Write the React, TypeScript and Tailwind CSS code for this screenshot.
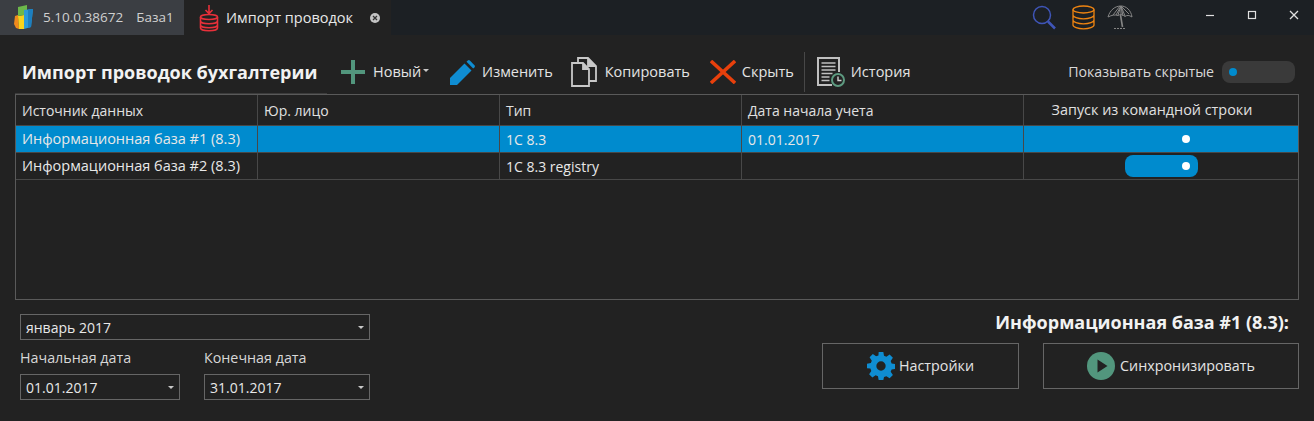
const font = "font-['Open_Sans','Noto_Sans',sans-serif]";

function Caret({ className = '' }: { className?: string }) {
  return <span className={`border-x-[3px] border-t-[3px] border-x-transparent border-t-[#c8c8c8] ${className}`} />;
}

function Logo() {
  return (
    <svg width="20" height="25" viewBox="0 0 20 25">
      <path d="M1 11l3-1 1 14-3-1-2-4z" fill="#f08a1d" />
      <path d="M4 11l6-1v14H5z" fill="#f6d31c" />
      <path d="M4 2l9-2v5h-3v5l-6 1z" fill="#6cb84a" />
      <path d="M10 5l9-1-2 18-7 2z" fill="#2b9ad8" />
      <path d="M14 4.500L19 4l-2 18-3 1z" fill="#1c7fc0" />
    </svg>
  );
}

function ImportIcon() {
  return (
    <svg width="20" height="28" viewBox="0 0 20 28" fill="none" stroke="#e8303a" strokeWidth="1.6">
      <path d="M10 1v8M6.500 6l3.500 3.500L13.500 6" />
      <ellipse cx="10" cy="13" rx="8.500" ry="2.500" />
      <path d="M1.500 13v11c0 1.500 3.500 2.800 8.500 2.800s8.500-1.300 8.500-2.800V13M1.500 17c0 1.500 3.500 2.800 8.500 2.800s8.500-1.300 8.500-2.800M1.500 21c0 1.500 3.500 2.800 8.500 2.800s8.500-1.300 8.500-2.800" />
    </svg>
  );
}

function TabClose() {
  return (
    <span className="flex h-[10px] w-[10px] items-center justify-center rounded-full bg-[#c4c4c4]">
      <svg width="6" height="6" viewBox="0 0 6 6" stroke="#333" strokeWidth="1.300">
        <path d="M1 1l4 4M5 1L1 5" />
      </svg>
    </span>
  );
}

function SearchIcon() {
  return (
    <svg width="24" height="26" viewBox="0 0 24 26" fill="none" stroke="#3f55b8" strokeWidth="1.500">
      <circle cx="10" cy="10" r="8.500" />
      <path d="M16 16.500l7 7" strokeWidth="2.500" />
    </svg>
  );
}

function DbIcon() {
  return (
    <svg width="23" height="25" viewBox="0 0 23 25" fill="none" stroke="#ee8411" strokeWidth="1.300">
      <ellipse cx="11.500" cy="4.500" rx="10.500" ry="3.500" />
      <path d="M1 4.500v15.500c0 2 4.700 3.800 10.500 3.800S22 22 22 20V4.500M1 10c0 2 4.700 3.800 10.500 3.800S22 12 22 10M1 15c0 2 4.700 3.800 10.500 3.800S22 17 22 15" />
    </svg>
  );
}

function UmbrellaIcon() {
  return (
    <svg width="26" height="25" viewBox="0 0 26 25" fill="none" stroke="#858585" strokeWidth="1">
      <path d="M1 12C3 5 8 1 14 1c5 0 10 4 11 11-3-2-5-2-7-.5-2-2-5-2.500-7-1-3-1-6-.5-10 1.500z" />
      <path d="M6 10l7-9M9 10l5-9M11 10l3-9M14 10V1M16 11l-2-10M18 11l-4-10M22 9l-8-8" />
      <path d="M13.500 10l2 12" strokeWidth="1.600" />
      <path d="M7 23.500h12" strokeDasharray="2 1" />
    </svg>
  );
}

function PencilIcon() {
  return (
    <svg width="25" height="25" viewBox="0 0 25 25" fill="#0f8dd2">
      <path d="M0 25v-7L14.500 3.500l7 7L7 25z" />
      <path d="M16.500 1.800l1.300-1.300a1.500 1.500 0 0 1 2 0l4.700 4.700a1.500 1.500 0 0 1 0 2l-1.300 1.300z" />
    </svg>
  );
}

function CopyIcon() {
  return (
    <svg width="27" height="30" viewBox="0 0 27 30" fill="none" stroke="#c8c8c8" strokeWidth="1.800">
      <path d="M7 6V1h10l8 8v15h-7" />
      <path d="M17 1v8h8" fill="#c8c8c8" />
      <path d="M1 6h11l6 6v17H1z" fill="#222" />
      <path d="M12 6v6h6" fill="#c8c8c8" />
    </svg>
  );
}

function HistoryIcon() {
  return (
    <svg width="28" height="30" viewBox="0 0 28 30" fill="none" stroke="#c0c0c0" strokeWidth="1.600">
      <path d="M15 28H1V1h21v14" strokeWidth="2" />
      <path d="M4.500 6h14M4.500 9.500h14M4.500 13h14M4.500 16.500h11M4.500 20h8M4.500 23.500h8" />
      <circle cx="21" cy="23" r="6" stroke="#5d9a80" strokeWidth="2" />
      <path d="M21 19.500v4h3.500" stroke="#d0d0d0" strokeWidth="1.400" />
    </svg>
  );
}

function GearIcon() {
  return (
    <svg width="28" height="28" viewBox="0 0 24 24" fill="#0f8dd2" fillRule="evenodd">
      <path d="M10 0h4l.6 3.300 2 .8L19.400 2.200l2.800 2.800-1.900 2.800.8 2 3.300.6v4l-3.300.6-.8 2 1.900 2.800-2.800 2.800-2.800-1.900-2 .8L14 24h-4l-.6-3.300-2-.8-2.800 1.900-2.800-2.800 1.900-2.800-.8-2L0 14v-4l3.300-.6.8-2-1.900-2.800 2.800-2.800 2.800 1.900 2-.8zM12 8a4 4 0 1 0 0 8 4 4 0 0 0 0-8z" />
    </svg>
  );
}

function PlayIcon() {
  return (
    <svg width="28" height="28" viewBox="0 0 28 28">
      <circle cx="14" cy="14" r="14" fill="#52967d" />
      <path d="M10.500 7.500L20.500 14l-10 6.500z" fill="#222" />
    </svg>
  );
}

function Select({ text, className }: { text: string; className: string }) {
  return (
    <div className={`flex h-[26px] items-center justify-between border border-[#666] pl-[5px] pr-[5px] text-[14px] text-[#e8e8e8] ${className}`}>
      <span>{text}</span>
      <Caret />
    </div>
  );
}

function Tool({ icon, label, gap, caret = false }: { icon: React.ReactNode; label: string; gap: string; caret?: boolean }) {
  return (
    <div className={`flex items-center ${gap}`}>
      {icon}
      <span className="text-[14.5px] text-[#e4e4e4]">{label}</span>
      {caret && <Caret className="-ml-[6px] -mt-[3px]" />}
    </div>
  );
}

const columns = ['w-[242px] text-[14.5px]', 'w-[242px]', 'w-[242px]', 'w-[282px]'];

function Row({ cells, selected, toggle }: { cells: string[]; selected?: boolean; toggle?: boolean }) {
  return (
    <div className={`flex h-[27px] border-b border-[#484848] text-[14px] text-[#e8e8e8] ${selected ? 'bg-[#008bce]' : ''}`}>
      {cells.map((cell, i) => (
        <div key={i} className={`flex items-center border-r border-[#484848] px-[6px] ${columns[i]}`}>
          {cell}
        </div>
      ))}
      <div className="flex flex-1 items-center justify-center">
        <div className={`flex h-[22px] w-[73px] items-center justify-end rounded-[8px] pr-[8px] ${toggle ? 'bg-[#008bce]' : ''}`}>
          <span className="h-[8px] w-[8px] rounded-full bg-white" />
        </div>
      </div>
    </div>
  );
}

export default function App() {
  return (
    <div className={`flex h-[421px] w-[1314px] flex-col overflow-hidden bg-[#222222] ${font}`}>
      {/* title bar */}
      <div className="flex h-[35px] shrink-0 bg-[#1c2024]">
        <div className="flex w-[184px] items-center gap-[9px] bg-[#3b3e43] pl-[14px] text-[13.5px] text-[#d0d0d0]">
          <Logo />
          <span>5.10.0.38672</span>
          <span className="ml-[4px]">База1</span>
        </div>
        <div className="flex w-[207px] items-center bg-[#222222] pl-[15px] text-[14.5px] text-[#e8e8e8]">
          <ImportIcon />
          <span className="ml-[7px]">Импорт проводок</span>
          <span className="ml-[17px]"><TabClose /></span>
        </div>
        <div className="ml-auto flex items-center pr-[14px]">
          <SearchIcon />
          <span className="ml-[16px]"><DbIcon /></span>
          <span className="ml-[12px]"><UmbrellaIcon /></span>
          <div className="-mt-[5px] ml-[71px] flex items-center gap-[30px] text-[#e0e0e0]">
            <svg width="12" height="12" viewBox="0 0 12 12" stroke="currentColor" strokeWidth="1.200"><path d="M2 6.500h8" /></svg>
            <svg width="12" height="12" viewBox="0 0 12 12" fill="none" stroke="currentColor" strokeWidth="1.200"><rect x="2.500" y="2.500" width="7" height="7" /></svg>
            <svg width="12" height="12" viewBox="0 0 12 12" stroke="currentColor" strokeWidth="1.300"><path d="M2 2l8 8M10 2l-8 8" /></svg>
          </div>
        </div>
      </div>

      {/* toolbar */}
      <div className="flex h-[58px] shrink-0 items-center pl-[22px] pr-[19px] pt-[16px]">
        <span className="w-[319px] text-[18px] font-bold text-[#f2f2f2]">Импорт проводок бухгалтерии</span>
        <Tool
          label="Новый"
          caret
          gap="gap-[8px]"
          icon={
            <svg width="24" height="24" viewBox="0 0 24 24" fill="#52967d">
              <path d="M10 0h4v10h10v4H14v10h-4V14H0v-4h10z" />
            </svg>
          }
        />
        <div className="ml-[21px]"><Tool label="Изменить" gap="gap-[7px]" icon={<PencilIcon />} /></div>
        <div className="ml-[18px]"><Tool label="Копировать" gap="gap-[7px]" icon={<CopyIcon />} /></div>
        <div className="ml-[20px]">
          <Tool
            label="Скрыть"
            gap="gap-[6px]"
            icon={
              <svg width="26" height="24" viewBox="0 0 26 24" stroke="#e8400c" strokeWidth="3.500">
                <path d="M1 1l24 22M25 1L1 23" />
              </svg>
            }
          />
        </div>
        <div className="ml-[10px] h-[40px] w-px bg-[#484848]" />
        <div className="ml-[12px]"><Tool label="История" gap="gap-[6px]" icon={<HistoryIcon />} /></div>
        <div className="ml-auto flex items-center gap-[8px]">
          <span className="text-[14.2px] text-[#d8d8d8]">Показывать скрытые</span>
          <div className="flex h-[22px] w-[73px] items-center rounded-[8px] bg-[#3a3a3a] pl-[7px]">
            <span className="h-[8px] w-[8px] rounded-full bg-[#008bce]" />
          </div>
        </div>
      </div>
      <div className="ml-[15px] h-px w-[312px] shrink-0 bg-[#3c3c3c]" />

      {/* table */}
      <div className="mx-[15px] h-[206px] shrink-0 border border-[#5a5a5a]">
        <div className="flex h-[31px] border-b border-[#484848] text-[14px] text-[#e0e0e0]">
          <div className="flex w-[242px] items-center border-r border-[#484848] px-[6px]">Источник данных</div>
          <div className="flex w-[242px] items-center border-r border-[#484848] px-[6px]">Юр. лицо</div>
          <div className="flex w-[242px] items-center border-r border-[#484848] px-[6px]">Тип</div>
          <div className="flex w-[282px] items-center border-r border-[#484848] px-[6px]">Дата начала учета</div>
          <div className="flex flex-1 items-center justify-center pr-[18px] text-[14.4px]">Запуск из командной строки</div>
        </div>
        <Row selected cells={['Информационная база #1 (8.3)', '', '1С 8.3', '01.01.2017']} />
        <Row toggle cells={['Информационная база #2 (8.3)', '', '1С 8.3 registry', '']} />
      </div>

      {/* bottom panel */}
      <div className="flex flex-1 justify-between pl-[20px] pr-[15px] pt-[14px]">
        <div className="w-[350px]">
          <Select text="январь 2017" className="w-full" />
          <div className="mt-[8px] flex gap-[24px]">
            <div className="flex flex-col gap-[7px]">
              <span className="text-[14.3px] leading-[19px] text-[#d8d8d8]">Начальная дата</span>
              <Select text="01.01.2017" className="w-[160px]" />
            </div>
            <div className="flex flex-col gap-[7px]">
              <span className="text-[14.3px] leading-[19px] text-[#d8d8d8]">Конечная дата</span>
              <Select text="31.01.2017" className="w-[166px]" />
            </div>
          </div>
        </div>
        <div className="flex flex-col items-end">
          <span className="-mt-[3px] mr-[10px] text-[18px] font-bold leading-[22px] text-[#f2f2f2]">Информационная база #1 (8.3):</span>
          <div className="mt-[10px] flex gap-[24px]">
            <div className="flex h-[46px] w-[197px] items-center justify-center gap-[4px] border border-[#666] text-[14.3px] text-[#e4e4e4]">
              <GearIcon />
              Настройки
            </div>
            <div className="flex h-[46px] w-[256px] items-center justify-center gap-[5px] border border-[#666] text-[14.3px] text-[#e4e4e4]">
              <PlayIcon />
              Синхронизировать
            </div>
          </div>
        </div>
      </div>
    </div>
  );
}
